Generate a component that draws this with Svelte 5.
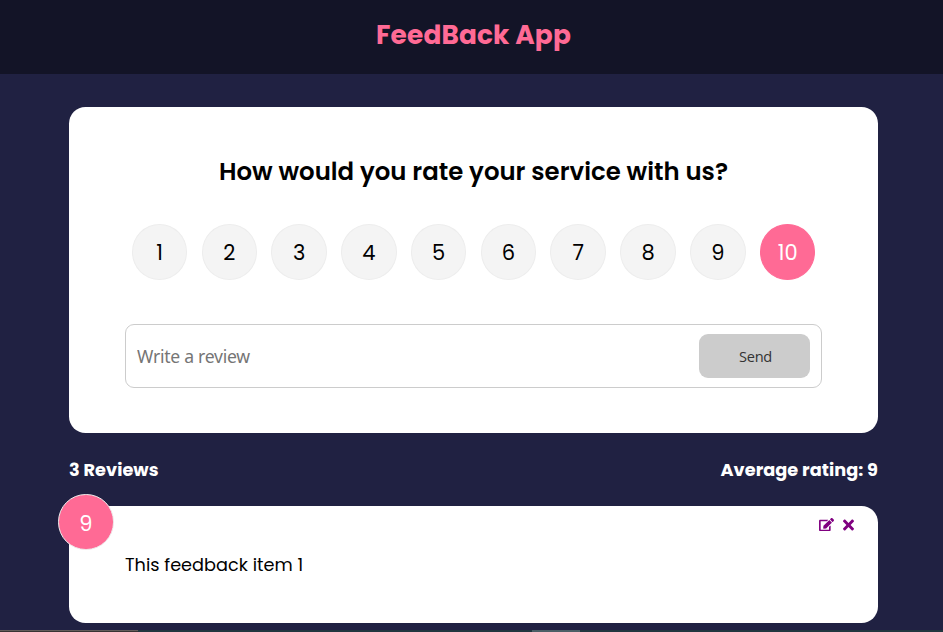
<script>
  const ratings = [1, 2, 3, 4, 5, 6, 7, 8, 9, 10];
  let selected = $state(10);
  let text = $state('');
</script>

<div class="page">
  <header><h1>FeedBack App</h1></header>
  <main>
    <section class="card form">
      <h2>How would you rate your service with us?</h2>
      <ul>
        {#each ratings as n}
          <li>
            <button class="rate" class:active={n === selected} onclick={() => (selected = n)}>{n}</button>
          </li>
        {/each}
      </ul>
      <div class="group">
        <input type="text" placeholder="Write a review" bind:value={text} />
        <button class="send" disabled={text.length < 10}>Send</button>
      </div>
    </section>
    <div class="stats">
      <h4 class="count">3 Reviews</h4>
      <h4 class="average">Average rating: 9</h4>
    </div>
    <article class="card item">
      <div class="badge">9</div>
      <div class="actions">
        <svg width="15" height="13.300" viewBox="0 0 576 512" fill="currentColor"><path d="M402.600 83.200l90.200 90.200c3.800 3.800 3.800 10 0 13.800L274.400 405.600l-92.800 10.300c-12.400 1.400-22.900-9.100-21.500-21.500l10.300-92.800L388.800 83.200c3.800-3.800 10-3.800 13.800 0zm162-22.900l-48.800-48.800c-15.200-15.200-39.900-15.200-55.200 0l-35.400 35.400c-3.800 3.800-3.800 10 0 13.800l90.200 90.200c3.800 3.800 10 3.800 13.800 0l35.400-35.400c15.200-15.300 15.200-40 0-55.200zM384 346.200V448H64V128h229.800c3.200 0 6.200-1.300 8.500-3.500l40-40c7.600-7.600 2.200-20.500-8.500-20.500H48C21.500 64 0 85.500 0 112v352c0 26.500 21.500 48 48 48h352c26.500 0 48-21.500 48-48V306.200c0-10.700-12.900-16-20.500-8.500l-40 40c-2.200 2.300-3.500 5.300-3.500 8.500z" /></svg>
        <svg width="11" height="16" viewBox="0 0 352 512" fill="currentColor"><path d="M242.720 256l100.070-100.070c12.280-12.280 12.280-32.190 0-44.480l-22.240-22.240c-12.280-12.280-32.190-12.280-44.480 0L176 189.280 75.930 89.210c-12.280-12.280-32.190-12.280-44.480 0L9.210 111.450c-12.280 12.280-12.280 32.190 0 44.480L109.280 256 9.210 356.070c-12.280 12.280-12.280 32.190 0 44.480l22.240 22.240c12.280 12.280 32.200 12.280 44.480 0L176 322.720l100.070 100.070c12.280 12.280 32.200 12.280 44.480 0l22.240-22.240c12.280-12.280 12.280-32.190 0-44.480L242.720 256z" /></svg>
      </div>
      <p>This feedback item 1</p>
    </article>
  </main>
  <footer><span class="task"></span><span class="thumb"></span></footer>
</div>

<style>
  .page {
    box-sizing: border-box;
    position: relative;
    width: 943px;
    height: 632px;
    overflow: hidden;
    background: #202142;
    font-family: Poppins, Inter, sans-serif;
    color: #000;
  }
  h1, h2, h4, p, ul { margin: 0; padding: 0; }
  header {
    display: flex;
    justify-content: center;
    height: 74px;
    padding-left: 4px;
    background: #131427;
  }
  h1 {
    color: #ff6a95;
    font-size: 26.4px;
    line-height: 40px;
    padding-top: 15px;
    font-weight: 700;
    letter-spacing: 0.13px;
    white-space: nowrap;
  }
  main { width: 809px; margin: 33px auto 0 69px; }
  .card { box-sizing: border-box; position: relative; background: #fff; border-radius: 16.5px; }
  .form { height: 326px; padding: 47px 56px 0; }
  h2 {
    text-align: center;
    font-size: 24.4px;
    line-height: 36px;
    font-weight: 600;
    letter-spacing: 0.02px;
    white-space: nowrap;
  }
  ul { display: flex; justify-content: space-around; list-style: none; margin: 34px -0.6px 44px -0.4px; }
  li { display: flex; }
  .rate {
    box-sizing: border-box;
    width: 55.6px;
    height: 56px;
    padding: 1px 0 0;
    border: 1px solid #ededed;
    border-radius: 50%;
    background: #f4f4f4;
    color: #000;
    font: inherit;
    font-size: 21px;
    font-weight: 400;
  }
  .rate.active { background: #ff6a95; border-color: #ff6a95; color: #fff; }
  .group {
    box-sizing: border-box;
    display: flex;
    align-items: center;
    height: 64px;
    padding: 0 11px;
    border: 1px solid #ccc;
    border-radius: 9px;
  }
  input {
    flex: 1;
    min-width: 0;
    padding: 0;
    border: 0;
    outline: 0;
    background: transparent;
    font-family: 'Noto Sans', sans-serif;
    font-size: 17.6px;
    letter-spacing: -0.28px;
  }
  input::placeholder { color: #757575; opacity: 1; }
  .send {
    width: 111px;
    height: 44px;
    padding: 0 0 0 2px;
    border: 0;
    border-radius: 9px;
    background: #ccc;
    color: #333;
    font-family: 'Open Sans', sans-serif;
    font-size: 14.6px;
    letter-spacing: -0.3px;
  }
  .stats { display: flex; justify-content: space-between; align-items: center; height: 73px; }
  h4 { color: #fff; font-size: 17.7px; font-weight: 700; line-height: 26px; letter-spacing: 0.04px; white-space: nowrap; }
  .item { height: 117px; padding: 45px 56px 0; }
  .item p { font-size: 17.7px; line-height: 27px; letter-spacing: 0.02px; white-space: nowrap; }
  .badge {
    box-sizing: border-box;
    position: absolute;
    left: -11px;
    top: -12px;
    width: 55.5px;
    height: 55.5px;
    padding-top: 2px;
    border: 1px solid #eee;
    border-radius: 50%;
    background: #ff6a95;
    color: #fff;
    font-size: 21px;
    line-height: 54px;
    text-align: center;
  }
  .actions {
    position: absolute;
    top: 10.5px;
    right: 24px;
    display: flex;
    align-items: center;
    gap: 9px;
    color: purple;
  }
  footer {
    position: absolute;
    left: 0;
    right: 0;
    bottom: 0;
    display: flex;
    height: 2px;
    background: #21363f;
  }
  .task { box-sizing: border-box; width: 138px; border-top: 1px solid #625c5a; background: #393434; }
  .thumb { width: 48px; margin-left: 394px; background: #4c5f67; }
</style>
